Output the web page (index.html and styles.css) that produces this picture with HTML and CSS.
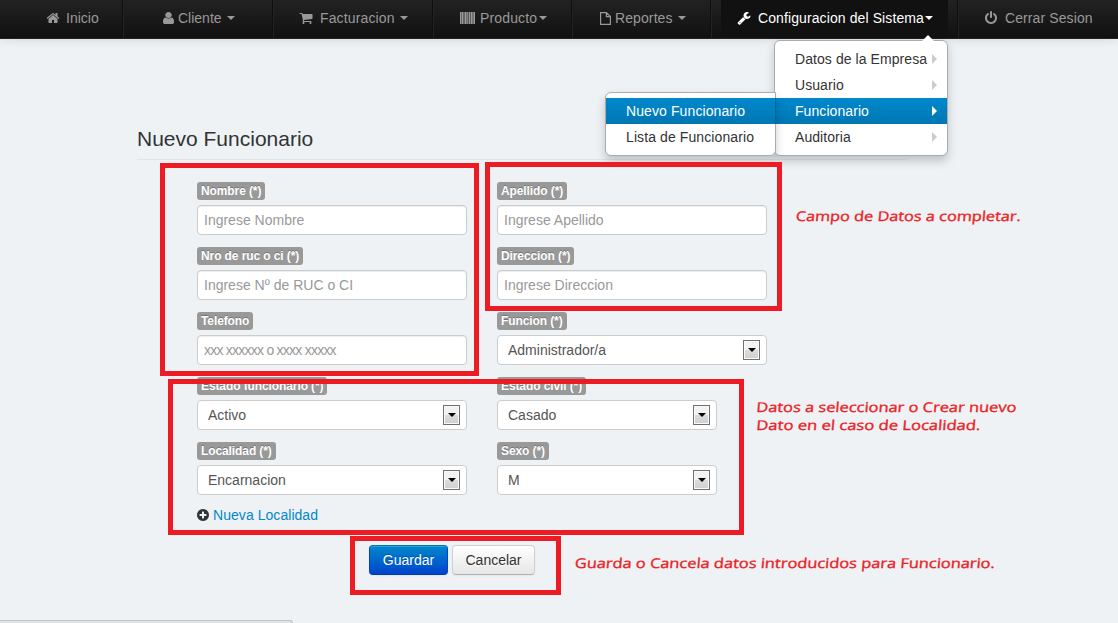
FILE: index.html
```html
<!DOCTYPE html>
<html lang="es">
<head>
<meta charset="utf-8">
<title>Nuevo Funcionario</title>
<link rel="stylesheet" href="styles.css">
</head>
<body>
<nav class="navbar">
  <a class="nav-item nav-home"><svg class="icon" viewBox="0 0 1792 1792"><path d="M1472 992v480q0 26-19 45t-45 19h-384v-384h-256v384h-384q-26 0-45-19t-19-45v-480q0-1 .5-3t.5-3l575-474 575 474q1 2 1 6zm223-69l-62 74q-8 9-21 11h-3q-13 0-21-7l-692-577-692 577q-12 8-24 7-13-2-21-11l-62-74q-8-10-7-23.5t11-21.5l719-599q32-26 76-26t76 26l244 204v-195q0-14 9-23t23-9h192q14 0 23 9t9 23v408l219 182q10 8 11 21.5t-7 23.5z"/></svg><span>Inicio</span></a>
  <a class="nav-item nav-client"><svg class="icon icon-user" viewBox="256 128 1280 1536" preserveAspectRatio="none"><path d="M1536 1399q0 109-62.5 187t-150.5 78h-854q-88 0-150.5-78t-62.5-187q0-85 8.5-160.5t31.5-152 58.5-131 94-89 134.5-34.5q131 128 313 128t313-128q76 0 134.5 34.5t94 89 58.5 131 31.5 152 8.5 160.5zm-256-887q0 159-112.5 271.5t-271.5 112.5-271.5-112.5-112.5-271.5 112.5-271.5 271.5-112.5 271.5 112.5 112.5 271.5z"/></svg><span>Cliente</span><i class="caret"></i></a>
  <a class="nav-item nav-billing"><svg class="icon" viewBox="0 0 1792 1792"><path d="M704 1536q0 52-38 90t-90 38-90-38-38-90 38-90 90-38 90 38 38 90zm896 0q0 52-38 90t-90 38-90-38-38-90 38-90 90-38 90 38 38 90zm128-1088v512q0 24-16.5 42.5t-40.5 21.5l-1044 122q13 60 13 70 0 16-24 64h920q26 0 45 19t19 45-19 45-45 19h-1024q-26 0-45-19t-19-45q0-11 8-31.5t16-36 21.5-40 15.5-29.5l-177-823h-204q-26 0-45-19t-19-45 19-45 45-19h256q16 0 28.5 6.5t19.5 15.5 13 24.5 8 26 5.5 29.5 4.5 26h1201q26 0 45 19t19 45z"/></svg><span>Facturacion</span><i class="caret"></i></a>
  <a class="nav-item nav-product"><svg class="icon icon-barcode" viewBox="0 0 15 12"><path d="M0 0h1.6v12H0zM2 0h1.2v12H2zM3.6 0h1v12h-1zM5 0h1.7v12H5zM7.2 0h1v12h-1zM8.7 0h1.8v12H8.7zM11 0h1v12h-1zM12.3 0h1v12h-1zM13.6 0H15v12h-1.4z"/></svg><span>Producto</span><i class="caret"></i></a>
  <a class="nav-item nav-report"><svg class="icon icon-file" viewBox="0 0 11 13"><path d="M.6.6h5.8l4 4v7.8H.6zM6.4.6v4h4"/></svg><span>Reportes</span><i class="caret"></i></a>
  <div class="nav-item nav-config"><a class="nav-active"><svg class="icon" viewBox="0 0 1792 1792"><path d="M448 1472q0-26-19-45t-45-19-45 19-19 45 19 45 45 19 45-19 19-45zm644-420l-682 682q-37 37-90 37-52 0-91-37l-106-108q-38-36-38-90 0-53 38-91l681-681q39 98 114.5 173.5t173.5 114.5zm634-435q0 39-23 106-47 134-164.5 217.5t-258.5 83.5q-185 0-316.5-131.5t-131.5-316.5 131.5-316.5 316.5-131.5q58 0 121.5 16.5t107.5 46.5q16 11 16 28t-16 28l-293 169v224l193 107q5-3 79-48.5t135.5-81 70.5-35.5q15 0 23.5 10t8.5 25z"/></svg><span>Configuracion del Sistema</span><i class="caret"></i></a></div>
  <a class="nav-item nav-exit"><svg class="icon" viewBox="0 0 1792 1792"><path d="M1664 896q0 156-61 298t-164 245-245 164-298 61-298-61-245-164-164-245-61-298q0-182 80.5-343t226.5-270q43-32 95.5-25t83.5 50q32 42 24.5 94.5t-49.5 84.5q-98 74-151.5 181t-53.5 228q0 104 40.5 198.5t109.5 163.5 163.5 109.5 198.5 40.5 198.5-40.5 163.5-109.5 109.5-163.5 40.5-198.5q0-121-53.5-228t-151.5-181q-42-32-49.5-84.5t24.5-94.5q31-43 84-50t95 25q146 109 226.5 270t80.5 343zm-640-768v640q0 52-38 90t-90 38-90-38-38-90v-640q0-52 38-90t90-38 90 38 38 90z"/></svg><span>Cerrar Sesion</span></a>
</nav>

<main class="content">
  <h1 class="legend">Nuevo Funcionario</h1>
  <form class="form">
    <div class="fields">
      <div class="field"><label class="label">Nombre (*)</label><input class="input" placeholder="Ingrese Nombre"></div>
      <div class="field"><label class="label">Apellido (*)</label><input class="input" placeholder="Ingrese Apellido"></div>
      <div class="field"><label class="label">Nro de ruc o ci (*)</label><input class="input" placeholder="Ingrese Nº de RUC o CI"></div>
      <div class="field"><label class="label">Direccion (*)</label><input class="input" placeholder="Ingrese Direccion"></div>
      <div class="field"><label class="label">Telefono</label><input class="input input-phone" placeholder="xxx xxxxxx o xxxx xxxxx"></div>
      <div class="field"><label class="label">Funcion (*)</label><div class="select"><span>Administrador/a</span><b class="drop"></b></div></div>
      <div class="field"><label class="label">Estado funcionario (*)</label><div class="select"><span>Activo</span><b class="drop"></b></div></div>
      <div class="field"><label class="label">Estado civil (*)</label><div class="select select-short"><span>Casado</span><b class="drop"></b></div></div>
      <div class="field"><label class="label">Localidad (*)</label><div class="select"><span>Encarnacion</span><b class="drop"></b></div></div>
      <div class="field"><label class="label">Sexo (*)</label><div class="select select-short"><span>M</span><b class="drop"></b></div></div>
    </div>
    <a class="add-link"><svg class="icon-plus" viewBox="128 128 1536 1536"><path d="M1344 960v-128q0-26-19-45t-45-19h-256v-256q0-26-19-45t-45-19h-128q-26 0-45 19t-19 45v256h-256q-26 0-45 19t-19 45v128q0 26 19 45t45 19h256v256q0 26 19 45t45 19h128q26 0 45-19t19-45v-256h256q26 0 45-19t19-45zm320-64q0 209-103 385.5t-279.5 279.5-385.5 103-385.5-103-279.5-279.5-103-385.5 103-385.5 279.5-279.5 385.5-103 385.5 103 279.5 279.5 103 385.5z"/></svg><span>Nueva Localidad</span></a>
    <div class="actions"><button class="btn btn-primary" type="button">Guardar</button><button class="btn" type="button">Cancelar</button></div>
  </form>
</main>

<ul class="menu menu-main">
  <li>Datos de la Empresa</li>
  <li>Usuario</li>
  <li class="selected">Funcionario</li>
  <li>Auditoria</li>
</ul>
<ul class="menu menu-sub">
  <li class="selected">Nuevo Funcionario</li>
  <li>Lista de Funcionario</li>
</ul>

<div class="mark mark-personal"></div>
<div class="mark mark-address"></div>
<div class="mark mark-select"></div>
<div class="mark mark-actions"></div>

<svg class="notes" viewBox="0 0 1118 623">
  <text x="0" y="0" transform="translate(795.5 221) skewX(-5)" textLength="225" lengthAdjust="spacingAndGlyphs">Campo de Datos a completar.</text>
  <text x="0" y="0" transform="translate(756 412) skewX(-5)" textLength="260" lengthAdjust="spacingAndGlyphs">Datos a seleccionar o Crear nuevo</text>
  <text x="0" y="0" transform="translate(756 430) skewX(-5)" textLength="224" lengthAdjust="spacingAndGlyphs">Dato en el caso de Localidad.</text>
  <text x="0" y="0" transform="translate(574.5 568) skewX(-5)" textLength="420" lengthAdjust="spacingAndGlyphs">Guarda o Cancela datos introducidos para Funcionario.</text>
</svg>
<div class="statusbar"></div>
</body>
</html>
```
FILE: styles.css
```css
* { box-sizing: border-box; }
body {
  position: relative;
  margin: 0;
  width: 1118px;
  height: 623px;
  overflow: hidden;
  background: #eef2f5;
  color: #333;
  font: 14px/20px "Liberation Sans", Arial, sans-serif;
}

/* Top bar */
.navbar {
  display: flex;
  height: 39px;
  background: linear-gradient(#222, #111);
  border-bottom: 1px solid #252020;
  box-shadow: 0 1px 10px rgba(0, 0, 0, .1);
  color: #999;
}
.nav-item {
  display: flex;
  align-items: center;
  padding-bottom: 2px;
  border-left: 1px solid #0e0e0e;
  box-shadow: inset 1px 0 #242424;
  white-space: nowrap;
}
.icon { width: 14px; height: 14px; fill: currentColor; flex: none; }
.icon-user { width: 11px; height: 12px; }
.icon-barcode { width: 15px; height: 12px; }
.icon-file { width: 11px; height: 13px; fill: none; stroke: currentColor; stroke-width: 1.2; }
.caret {
  margin-left: 5px;
  border: 4px solid transparent;
  border-top-color: currentColor;
  border-bottom: 0;
}
.nav-home { width: 122px; padding-left: 46px; gap: 6px; border: 0; box-shadow: none; }
.nav-client { width: 150px; padding-left: 40px; gap: 4px; }
.nav-client .caret { margin-left: 1px; }
.nav-billing { width: 160px; padding-left: 26px; gap: 6px; letter-spacing: .14px; }
.nav-billing .icon { margin-right: 1px; }
.nav-billing .caret { margin-left: -1px; }
.nav-product { width: 139px; padding-left: 27px; gap: 5px; letter-spacing: .14px; }
.nav-product .caret { margin-left: -3px; }
.nav-report { width: 139px; padding-left: 28px; gap: 4px; letter-spacing: .1px; }
.nav-report .caret { margin-left: 1px; }
.nav-config { width: 247px; padding: 0 0 0 10px; color: #fff; }
.nav-active {
  display: flex;
  align-items: center;
  width: 227px;
  height: 38px;
  padding: 0 0 2px 16px;
  gap: 7px;
  background: #111;
  letter-spacing: .1px;
}
.nav-active .caret { margin-left: -6px; }
.nav-exit { width: 161px; padding-left: 26px; gap: 7px; letter-spacing: .1px; }

/* Form */
.content { width: 770px; margin: 80px 0 0 137px; }
.legend {
  height: 41px;
  margin: 0;
  border-bottom: 1px solid #e2e5e8;
  font-size: 21px;
  font-weight: normal;
  line-height: 40px;
}
.form { padding: 22px 0 0 60px; }
.fields { display: grid; grid-template-columns: 270px 270px; column-gap: 30px; grid-auto-rows: 65px; }
.field { display: flex; flex-direction: column; align-items: flex-start; gap: 5px; }
.label {
  height: 18px;
  padding: 2px 4px;
  border-radius: 3px;
  background: #999;
  color: #fff;
  font-size: 12px;
  font-weight: bold;
  letter-spacing: -.1px;
  line-height: 14px;
  text-shadow: 0 -1px 0 rgba(0, 0, 0, .25);
  white-space: nowrap;
}
.input, .select {
  width: 270px;
  height: 30px;
  border: 1px solid #ccc;
  border-radius: 4px;
  background: #fff;
  color: #555;
  font: 14px/20px "Liberation Sans", Arial, sans-serif;
}
.input { padding: 4px 6px; box-shadow: inset 0 1px 1px rgba(0, 0, 0, .075); }
.input::placeholder { color: #999; opacity: 1; }
.input-phone { letter-spacing: -.76px; }
.select { display: flex; align-items: center; justify-content: space-between; padding: 0 6px 0 10px; }
.select-short { width: 220px; }
.drop {
  display: flex;
  align-items: center;
  justify-content: center;
  width: 17px;
  height: 20px;
  border: 1px solid #707070;
  background: linear-gradient(#f2f2f2 50%, #dcdcdc 50%, #cfcfcf);
  box-shadow: inset 0 0 0 1px #fafafa;
}
.drop::after { content: ""; border: 4px solid transparent; border-top-color: #000; border-bottom: 0; }
.add-link { display: flex; align-items: center; gap: 4px; height: 20px; margin-top: -2px; color: #08c; letter-spacing: .05px; }
.icon-plus { width: 12px; height: 12px; fill: #333; }
.actions { display: flex; gap: 4px; margin: 20px 0 0 172px; }
.btn {
  width: 83px;
  height: 30px;
  padding: 0;
  border: 1px solid #ccc;
  border-color: #d0d0d0 #d0d0d0 #b3b3b3;
  border-radius: 4px;
  background: linear-gradient(#fff, #e6e6e6);
  box-shadow: inset 0 1px 0 rgba(255, 255, 255, .2), 0 1px 2px rgba(0, 0, 0, .05);
  color: #333;
  font: 14px/20px "Liberation Sans", Arial, sans-serif;
  text-shadow: 0 1px 1px rgba(255, 255, 255, .75);
}
.btn-primary {
  width: 79px;
  border-color: #0077b8 #04c #003baa;
  background: linear-gradient(#08c, #04c);
  color: #fff;
  text-shadow: 0 -1px 0 rgba(0, 0, 0, .25);
}

/* Drop-down menus over the page */
.menu {
  position: absolute;
  margin: 0;
  padding: 5px 0;
  list-style: none;
  border: 1px solid #a9acae;
  border-radius: 6px;
  background: #fff;
  box-shadow: 0 5px 10px rgba(0, 0, 0, .2);
  letter-spacing: .1px;
}
.menu li { display: flex; align-items: center; justify-content: space-between; height: 26px; padding: 0 10px 0 20px; white-space: nowrap; }
.menu .selected { background: linear-gradient(#08c, #0077b3); color: #fff; }
.menu-main { left: 774px; top: 40px; width: 174px; letter-spacing: .07px; }
.menu-main li::after { content: ""; border: 5px solid transparent; border-left-color: #ccc; border-right: 0; }
.menu-main .selected::after { border-left-color: #fff; }
.menu-main::before {
  content: "";
  position: absolute;
  top: -6px;
  right: 13px;
  border: 6px solid transparent;
  border-bottom-color: #fff;
  border-top: 0;
}
.menu-sub { left: 605px; top: 92px; width: 171px; border-radius: 6px 0 6px 6px; }
.menu-sub .selected { margin-right: -1px; box-shadow: inset -1px 0 #00659a; }

/* Annotations drawn over the form */
.mark { position: absolute; border: 5px solid #ed1c24; }
.mark-personal { left: 160px; top: 163px; width: 319px; height: 213px; }
.mark-address { left: 485px; top: 162px; width: 297px; height: 149px; }
.mark-select { left: 168px; top: 379px; width: 576px; height: 156px; }
.mark-actions { left: 350px; top: 536px; width: 211px; height: 59px; }
.notes {
  position: absolute;
  left: 0;
  top: 0;
  width: 1118px;
  height: 623px;
  pointer-events: none;
  fill: #ed1c24;
  stroke: #ed1c24;
  stroke-width: .35px;
  font: 500 13.5px "Open Sans", sans-serif;
}
.statusbar {
  position: absolute;
  left: 0;
  bottom: 0;
  width: 293px;
  height: 3px;
  border: 1px solid #c2c5c8;
  border-width: 1px 1px 0 0;
  border-radius: 0 3px 0 0;
  background: #dfe2e5;
}
```
